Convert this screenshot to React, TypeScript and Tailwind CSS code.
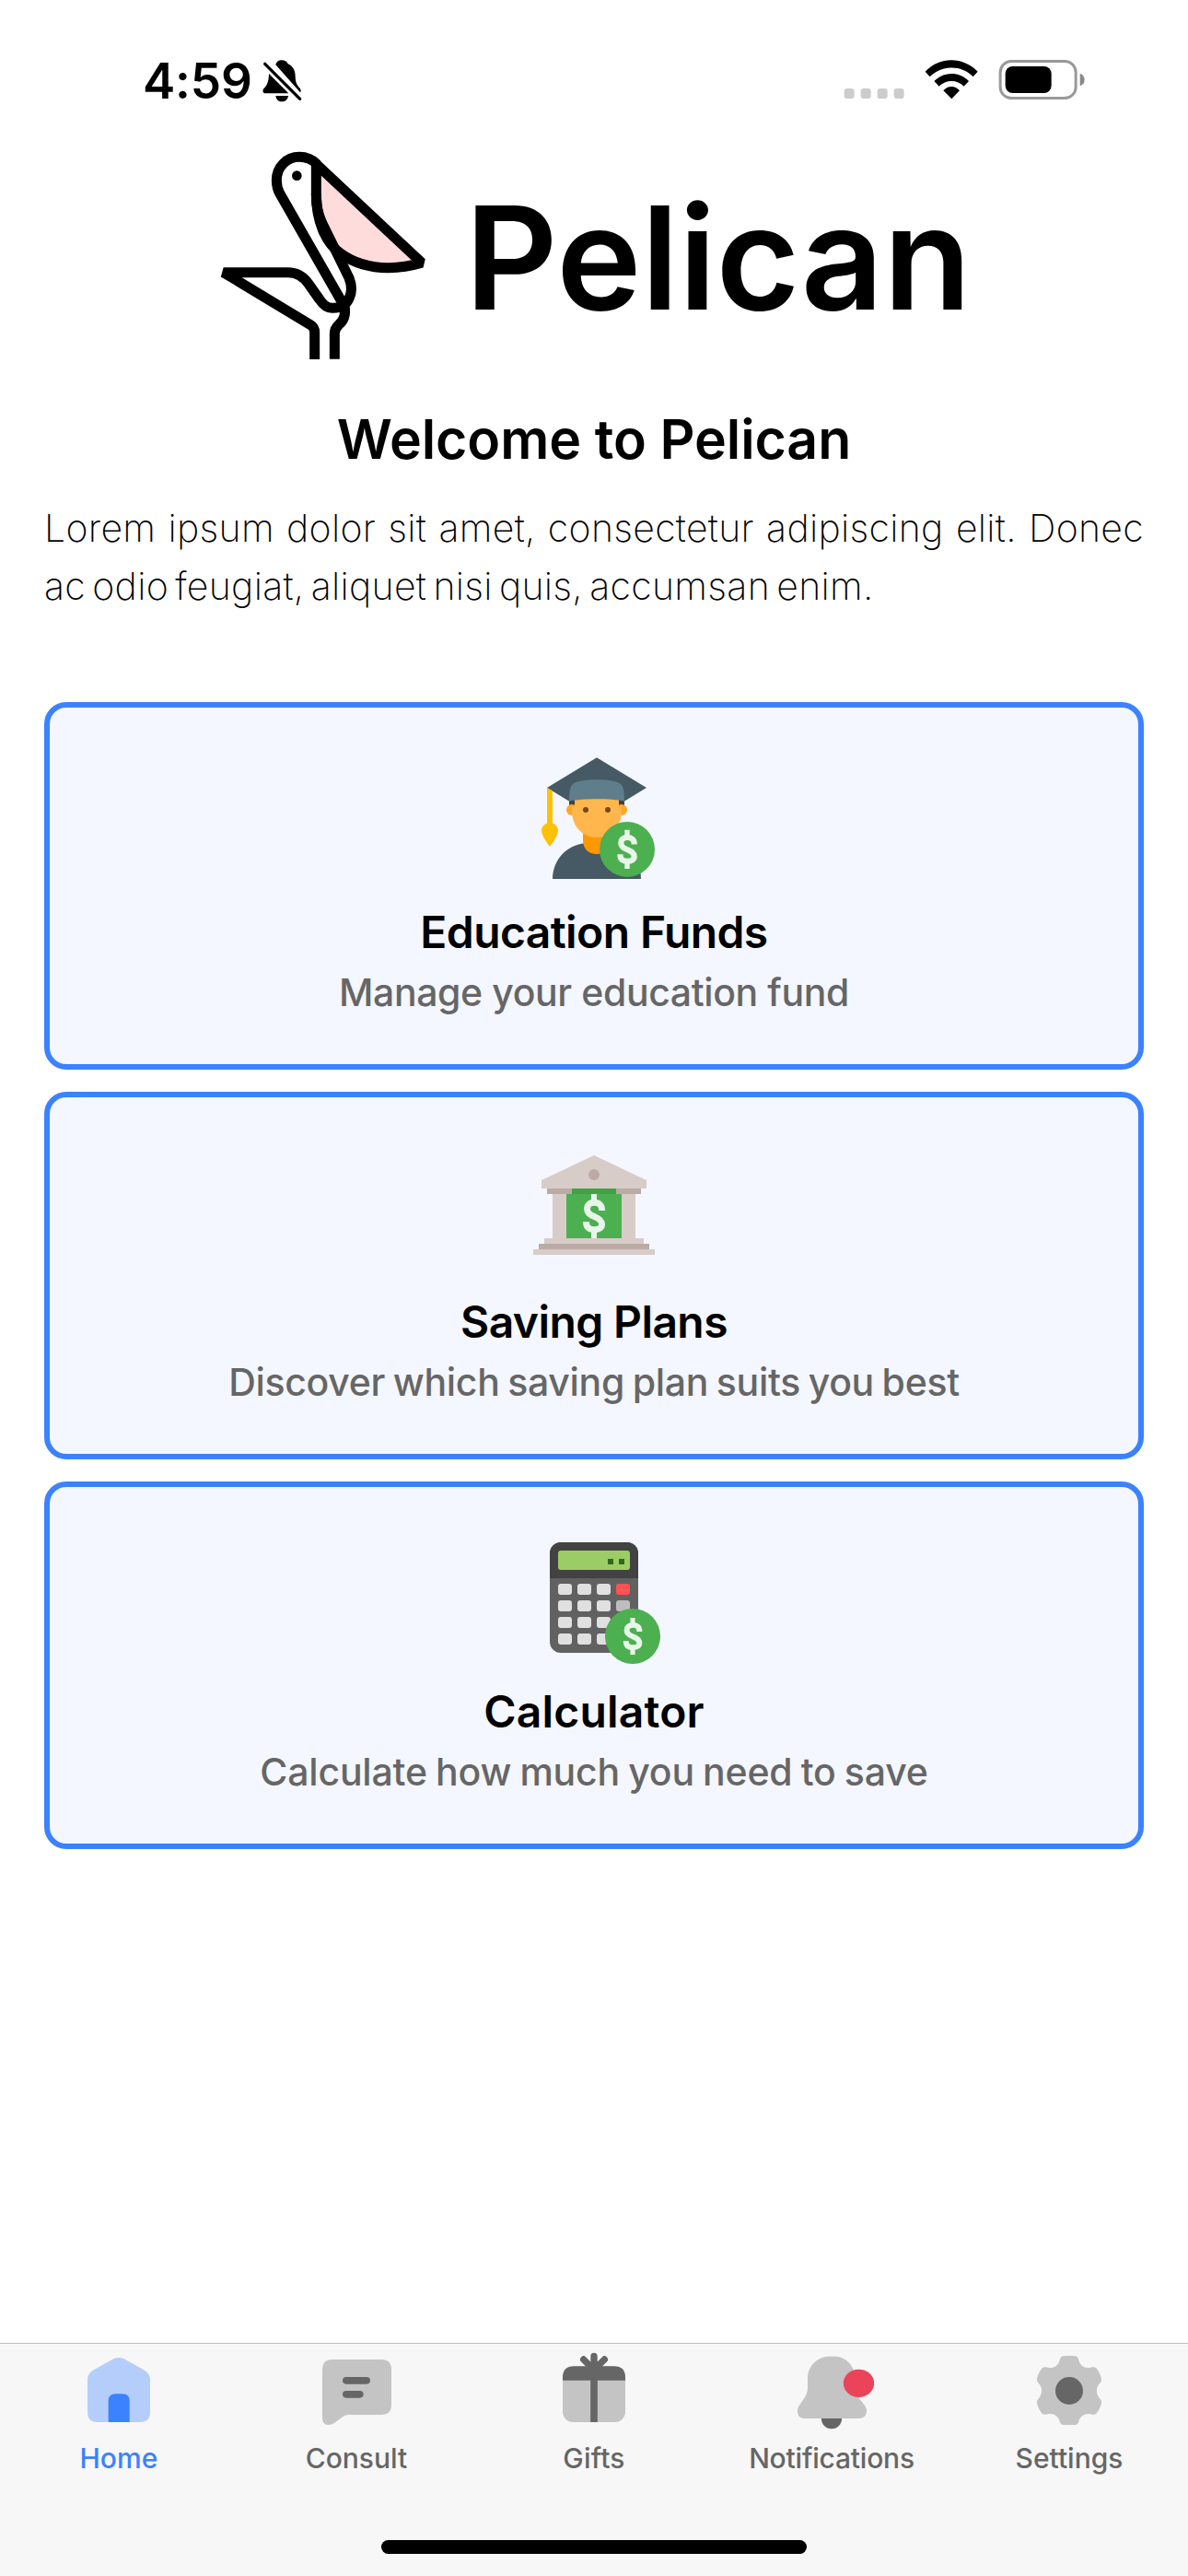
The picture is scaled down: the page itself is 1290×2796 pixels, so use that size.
import type { ReactNode } from "react";

function StatusBar() {
  return (
    <div className="flex h-[150px] items-start justify-between pl-[155px] pr-[110px] pt-[56px]">
      <div className="flex items-start">
        <span className="w-[130px] text-[53px] font-semibold leading-[64px] tracking-[-0.2px]">4:59</span>
        <svg className="mt-[8px] h-[48px] w-[44px]" viewBox="466 72 132 144">
          <path
            d="M509 91 C512 80 520 76 529 76 C538 76 546 80 549 88 C565 95 573 110 573 128 C573 150 580 158 588 167 C592 173 592 178 589 181 Z M487 120 L551 184 H476 C467 184 465 175 470 169 C480 158 486 150 487 120 Z M509 192 H550 C548 205 540 211 529 211 C519 211 511 205 509 192 Z"
          />
          <path d="M474 88 L588 202" stroke="black" strokeWidth="10" strokeLinecap="round" />
        </svg>
      </div>
      <svg className="mt-[8px] h-[46px] w-[264px]" viewBox="76 72 792 138">
        <g fill="#cccccc">
          <rect x="78" y="168" width="33" height="33" rx="10" />
          <rect x="132" y="168" width="33" height="33" rx="10" />
          <rect x="186" y="168" width="33" height="33" rx="10" />
          <rect x="240" y="168" width="33" height="33" rx="10" />
        </g>
        <path d="M342 113 C390 63 465 63 513 113 L498 130 C460 91 395 91 357 130 Z" />
        <path d="M371 144 C403 112 452 112 484 144 L468 161 C446 138 409 138 387 161 Z" />
        <path d="M401 175 C416 158 439 158 454 175 L428 202 Z" />
        <rect x="586.5" y="79.500" width="246" height="120" rx="36" fill="none" stroke="#999999" strokeWidth="9" />
        <rect x="603" y="96" width="150" height="87" rx="24" />
        <path d="M846 119 C866 125 866 154 846 160 Z" fill="#8a8a8a" />
      </svg>
    </div>
  );
}

function PelicanMark() {
  return (
    <svg className="h-[250px] w-[260px] shrink-0" viewBox="0 0 780 750" fill="none" stroke="black" strokeWidth="33">
      <path d="M370 84 V180 C370 270 400 340 449 375 C500 412 560 422 605 422 C645 422 680 416 714 406 Z" fill="#ffdcdc" strokeLinejoin="bevel" />
      <path d="M365 720 V632 C365 622 360 613 352 608 L68 437 H278 C310 437 330 452 345 474 L381 525 C395 546 410 554 424 553 C450 553 469 541 478 520 C487 500 485 475 477 455 L400 298 C380 260 370 230 370 180" strokeLinejoin="bevel" />
      <path d="M458 541 L251 179 C245 168 241 155 241 137 C241 95 273 61 315 61 C338 61 358 70 373 85" />
      <path d="M430 719 V636 C430 624 434 616 444 607 C462 592 467 572 462 546" />
      <circle cx="307" cy="122" r="16" fill="black" stroke="none" />
    </svg>
  );
}

function Dollar({ transform }: { transform: string }) {
  return (
    <g transform={transform} fill="none" stroke="#e8f5e9" strokeWidth="2.3">
      <path d="M2.85 -2 V-2.4 C2.85 -4 1.8 -4.9 0.1 -4.9 C-1.6 -4.9 -2.5 -4 -2.5 -2.6 C-2.5 -1 -1.4 -.4 .2 .2 C1.9 .9 2.85 1.6 2.85 3 C2.85 4.2 1.8 4.9 .1 4.9 C-1.8 4.9 -2.8 4 -2.8 2.4 V2" />
      <path d="M0 -8 V-5 M0 8 V5" strokeWidth="2" />
    </g>
  );
}

function GraduateIcon() {
  return (
    <svg className="size-[144px]" viewBox="0 0 48 48">
      <path d="M9 45 C9 37.500 15 32 22 32 H28 C35 32 41 37.500 41 45 Z" fill="#455a64" />
      <path d="M20 25 H30 V31 C30 34 28 36 25 36 C22 36 20 34 20 31 Z" fill="#ff9800" />
      <path d="M25 1.1 L43 12 L25 23 L7 12 Z" fill="#455a64" />
      <path d="M15 15 H35 V19 L33 20 H17 L15 19 Z" fill="#424242" />
      <circle cx="16" cy="20" r="2" fill="#ffa726" />
      <circle cx="34" cy="20" r="2" fill="#ffa726" />
      <path d="M17 16 H33 V19.2 L34 18.500 V20.500 C34 26 30 30 25 30 C20 30 16 26 16 20.500 V18.500 L17 19.2 Z" fill="#ffb74d" />
      <circle cx="21" cy="20" r="1" fill="#784719" />
      <circle cx="29" cy="20" r="1" fill="#784719" />
      <path d="M15 16.800 C15 14 15.300 11.800 16 11 C17.500 8.400 32.500 8.400 34 11 C34.700 11.800 35 14 35 16.800 C30 15.800 20 15.800 15 16.800 Z" fill="#607d8b" />
      <path d="M7 12 L9 13.200 V24.800 C10.200 25.200 11 26.300 11 27.500 C11 29.500 8 33.300 8 33.300 C8 33.300 5 29.500 5 27.500 C5 26.300 5.800 25.200 7 24.800 Z" fill="#ffc107" />
      <circle cx="36" cy="34.300" r="10" fill="#4caf50" />
      <Dollar transform="translate(36 34.300) scale(.9 .88)" />
    </svg>
  );
}

function BankIcon() {
  return (
    <svg className="size-[144px]" viewBox="0 0 48 48">
      <rect x="9" y="18" width="30" height="16" fill="#d7ccc8" />
      <path d="M24 4 L43 13 V16 H5 V13 Z" fill="#d7ccc8" />
      <rect x="7" y="16" width="34" height="2" fill="#bcaaa4" />
      <circle cx="24" cy="11" r="2" fill="#bcaaa4" />
      <rect x="14" y="18" width="20" height="16" fill="#4caf50" />
      <rect x="16" y="16" width="16" height="2" fill="#43a047" />
      <rect x="6" y="34" width="36" height="2" fill="#d7ccc8" />
      <rect x="4" y="36" width="40" height="2" fill="#bcaaa4" />
      <rect x="2" y="38" width="44" height="2" fill="#d7ccc8" />
      <Dollar transform="translate(24 26)" />
    </svg>
  );
}

function CalculatorIcon() {
  return (
    <svg className="size-[144px]" viewBox="0 0 48 48">
      <rect x="8" y="3" width="32" height="40" rx="4" fill="#616161" />
      <path d="M40 16 V7 C40 4.800 38.200 3 36 3 H12 C9.800 3 8 4.800 8 7 V16 Z" fill="#424242" />
      <rect x="11" y="6" width="26" height="7" rx="1" fill="#9ccc65" />
      <rect x="29" y="9" width="2" height="2" fill="#33691e" />
      <rect x="33" y="9" width="2" height="2" fill="#33691e" />
      {[18, 24, 30, 36].map((y) =>
        [11, 18, 25, 32].map((x) => (
          <rect
            key={`${x}-${y}`}
            x={x}
            y={y}
            width="5"
            height="4"
            rx="1"
            fill={x < 32 ? "#e0e0e0" : y === 18 ? "#ff5252" : "#bdbdbd"}
          />
        )),
      )}
      <circle cx="38" cy="37" r="10" fill="#4caf50" />
      <Dollar transform="translate(38 37) scale(.86 .83)" />
    </svg>
  );
}

function Card({ icon, title, titleClass, text, textClass }: { icon: ReactNode; title: string; titleClass: string; text: string; textClass: string }) {
  return (
    <section className="flex h-[399px] flex-col items-center rounded-[24px] border-[6px] border-[#3b82ff] bg-[#f4f7ff] pt-[51px]">
      {icon}
      <h2 className={`mt-[19px] whitespace-nowrap text-[48px] font-semibold leading-[60px] ${titleClass}`}>{title}</h2>
      <p className={`mt-[5px] whitespace-nowrap text-[41px] font-medium leading-[60px] text-[#666666] ${textClass}`}>{text}</p>
    </section>
  );
}

function Tab({ label, active, labelClass, children }: { label: string; active?: boolean; labelClass: string; children: ReactNode }) {
  return (
    <div className={`flex flex-1 flex-col items-center pt-[6px] ${active ? "text-[#3b82ff]" : "text-[#666666]"}`}>
      <svg className="size-[90px] overflow-visible" viewBox="0 0 270 270">
        {children}
      </svg>
      <span className={`mt-[10px] whitespace-nowrap text-[30px] font-medium leading-[36px] ${labelClass}`}>{label}</span>
    </div>
  );
}

function TabBar() {
  return (
    <nav className="flex h-[253px] flex-col border-t border-[#bfbfbf] bg-[#f7f7f7]">
      <div className="flex flex-1">
        <Tab label="Home" active labelClass="tracking-[0.1px]">
          <path d="M119 30 Q135 24 151 30 L220 69 Q237 80 237 98 V204 Q237 237 204 237 H66 Q33 237 33 204 V98 Q33 80 50 69 Z" fill="#b5cdfb" />
          <path d="M101 237 V168 Q101 145 124 145 H147 Q170 145 170 168 V237 Z" fill="#3b82ff" />
        </Tab>
        <Tab label="Consult" labelClass="tracking-[0px]">
          <path d="M57 33 H216 Q249 33 249 66 V180 Q249 213 216 213 H110 Q100 213 91 219 L64 239 Q54 246 44 246 Q24 245 24 224 V66 Q24 33 57 33 Z" fill="#c4c4c4" />
          <rect x="90" y="90" width="90" height="23" rx="11.500" fill="#666666" />
          <rect x="90" y="135" width="68" height="23" rx="11.500" fill="#666666" />
        </Tab>
        <Tab label="Gifts" labelClass="tracking-[0.2px]">
          <rect x="33" y="56" width="204" height="181" rx="34" fill="#c4c4c4" />
          <path d="M33 101 V92 Q33 55 70 55 H200 Q237 55 237 92 V101 Z" fill="#666666" />
          <path d="M135 95 V237" stroke="#666666" strokeWidth="23" />
          <path d="M135 22 V70 M101 33 L128 60 M169 33 L142 60" stroke="#666666" strokeWidth="22" strokeLinecap="round" />
        </Tab>
        <Tab label="Notifications" labelClass="tracking-[-0.2px]">
          <circle cx="135" cy="225" r="33.500" fill="#666666" />
          <path d="M123 23 H149 C186 26 212 58 212 95 V125 C212 140 218 150 225 160 L243 182 Q249 190 249 201 Q247 225 224 225 H46 Q26 225 24 204 V197 Q25 187 32 179 L44 162 C52 150 57 139 57 125 V95 C57 56 86 26 123 23 Z" fill="#c4c4c4" />
          <ellipse cx="223.500" cy="110.500" rx="50" ry="45.500" fill="#eb445a" />
        </Tab>
        <Tab label="Settings" labelClass="tracking-[0px]">
          <path
            d="M115 22 Q135 20 155 22 C162 23 165 30 167 38 C171 52 185 62 200 60 C208 58 216 55 223 61 C231 70 237 82 240 95 C241 103 238 107 233 112 C222 125 222 145 233 158 C238 163 241 167 240 175 C237 188 231 200 223 209 C216 215 208 212 200 210 C185 208 171 218 167 232 C165 240 162 246 155 246 H115 C108 246 105 240 103 232 C99 218 85 208 70 210 C62 212 54 215 47 209 C39 200 33 188 30 175 C29 167 32 163 37 158 C48 145 48 125 37 112 C32 107 29 103 30 95 C33 82 39 70 47 61 C54 55 62 58 70 60 C85 62 99 52 103 38 C105 30 108 23 115 22 Z"
            fill="#c4c4c4"
          />
          <circle cx="135" cy="135" r="45" fill="#666666" />
        </Tab>
      </div>
      <div className="mb-[24px] h-[15px] w-[462px] self-center rounded-full bg-black" />
    </nav>
  );
}

export default function App() {
  return (
    <div className="flex h-[2796px] w-[1290px] flex-col bg-white font-['Inter',sans-serif] text-black">
      <StatusBar />
      <header className="flex h-[250px] pl-[220px]">
        <PelicanMark />
        <span className="ml-[25px] mt-[35px] whitespace-nowrap text-[156px] font-semibold leading-[190px] tracking-[-0.2px]">Pelican</span>
      </header>
      <main className="flex flex-1 flex-col px-[48px]">
        <h1 className="mt-[41px] whitespace-nowrap text-center text-[59px] font-semibold leading-[72px] tracking-[-0.1px]">Welcome to Pelican</h1>
        <p className="mt-[29px] whitespace-nowrap text-[41px] font-extralight leading-[63px] tracking-[0.3px] [word-spacing:-4.6px]">
          <span className="block [text-align-last:justify]">Lorem ipsum dolor sit amet, consectetur adipiscing elit. Donec</span>
          <span className="block">ac odio feugiat, aliquet nisi quis, accumsan enim.</span>
        </p>
        <div className="mt-[94px] flex flex-col gap-6">
          <Card icon={<GraduateIcon />} title="Education Funds" titleClass="tracking-[-0.6px]" text="Manage your education fund" textClass="tracking-[-0.4px]" />
          <Card icon={<BankIcon />} title="Saving Plans" titleClass="tracking-[-0.6px]" text="Discover which saving plan suits you best" textClass="tracking-[-0.3px] [word-spacing:-2px]" />
          <Card icon={<CalculatorIcon />} title="Calculator" titleClass="tracking-[0.2px]" text="Calculate how much you need to save" textClass="tracking-[-0.2px] [word-spacing:-1.5px]" />
        </div>
      </main>
      <TabBar />
    </div>
  );
}
